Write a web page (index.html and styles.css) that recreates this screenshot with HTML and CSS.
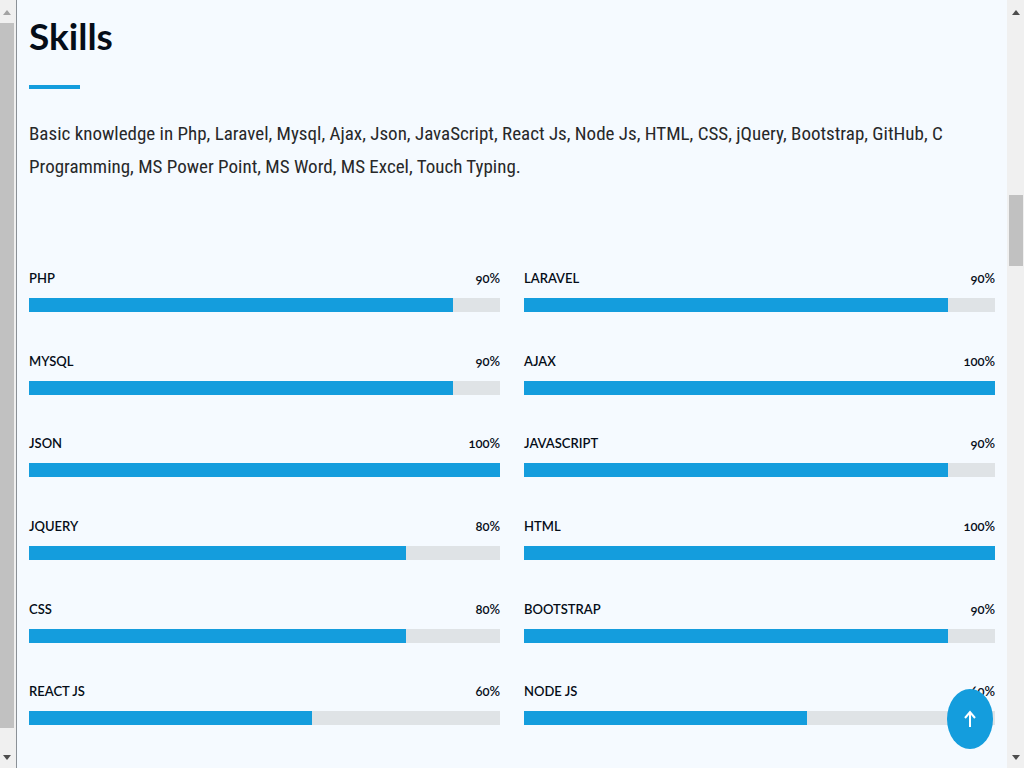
FILE: index.html
```html
<!DOCTYPE html>
<html lang="en">
<head>
<meta charset="utf-8">
<title>Skills</title>
<link rel="stylesheet" href="styles.css">
</head>
<body>
<div class="page">
  <div class="scrollbar scrollbar-left" aria-hidden="true">
    <svg class="arrow arrow-muted" viewBox="0 0 8 5"><path d="M4 0 8 5H0z"/></svg>
    <div class="rail"><div class="thumb"></div></div>
    <svg class="arrow" viewBox="0 0 8 5"><path d="M0 0h8L4 5z"/></svg>
  </div>
  <main class="skills">
    <h2 class="title">Skills</h2>
    <p class="intro">Basic knowledge in Php, Laravel, Mysql, Ajax, Json, JavaScript, React Js, Node Js, HTML, CSS, jQuery, Bootstrap, GitHub, C Programming, MS Power Point, MS Word, MS Excel, Touch Typing.</p>
    <div class="skill-grid">
      <div class="skill"><div class="label"><span>PHP</span><span>90%</span></div><div class="track"><div class="fill" style="width:90%"></div></div></div>
      <div class="skill"><div class="label"><span>LARAVEL</span><span>90%</span></div><div class="track"><div class="fill" style="width:90%"></div></div></div>
      <div class="skill"><div class="label"><span>MYSQL</span><span>90%</span></div><div class="track"><div class="fill" style="width:90%"></div></div></div>
      <div class="skill"><div class="label"><span>AJAX</span><span>100%</span></div><div class="track"><div class="fill" style="width:100%"></div></div></div>
      <div class="skill"><div class="label"><span>JSON</span><span>100%</span></div><div class="track"><div class="fill" style="width:100%"></div></div></div>
      <div class="skill"><div class="label"><span>JAVASCRIPT</span><span>90%</span></div><div class="track"><div class="fill" style="width:90%"></div></div></div>
      <div class="skill"><div class="label"><span>JQUERY</span><span>80%</span></div><div class="track"><div class="fill" style="width:80%"></div></div></div>
      <div class="skill"><div class="label"><span>HTML</span><span>100%</span></div><div class="track"><div class="fill" style="width:100%"></div></div></div>
      <div class="skill"><div class="label"><span>CSS</span><span>80%</span></div><div class="track"><div class="fill" style="width:80%"></div></div></div>
      <div class="skill"><div class="label"><span>BOOTSTRAP</span><span>90%</span></div><div class="track"><div class="fill" style="width:90%"></div></div></div>
      <div class="skill"><div class="label"><span>REACT JS</span><span>60%</span></div><div class="track"><div class="fill" style="width:60%"></div></div></div>
      <div class="skill"><div class="label"><span>NODE JS</span><span>60%</span></div><div class="track"><div class="fill" style="width:60%"></div></div></div>
    </div>
  </main>
  <div class="scrollbar scrollbar-right" aria-hidden="true">
    <svg class="arrow" viewBox="0 0 8 5"><path d="M4 0 8 5H0z"/></svg>
    <div class="rail"><div class="thumb"></div></div>
    <svg class="arrow" viewBox="0 0 8 5"><path d="M0 0h8L4 5z"/></svg>
  </div>
</div>
<a class="back-to-top" href="#" aria-label="Back to top">
  <svg viewBox="0 0 12 18"><path d="M6 17V2M1 8l5-6 5 6"/></svg>
</a>
</body>
</html>
```

FILE: styles.css
```css
* { box-sizing: border-box; }
body {
  margin: 0;
  background: #f5faff;
  color: #272829;
  font-family: "Roboto Condensed", Roboto, "Liberation Sans", sans-serif;
}
.page { display: flex; min-height: 100vh; }
.scrollbar {
  display: flex;
  flex: none;
  flex-direction: column;
  align-items: center;
  background: #f0f0f0;
  padding: 10px 0 8px;
}
.scrollbar-left {
  width: 17px;
  padding-right: 2px;
  border-right: 1px solid #8a9096;
}
.scrollbar-right { width: 17px; }
.arrow { width: 8px; height: 5px; flex: none; fill: #4d4d4d; }
.arrow-muted { fill: #a3a3a3; }
.rail { flex: 1; width: 14px; }
.thumb { background: #c1c1c1; }
.scrollbar-left .rail { padding: 8px 0 27px; }
.scrollbar-left .thumb { height: 100%; }
.scrollbar-right .rail { padding-top: 180px; }
.scrollbar-right .thumb { height: 71px; }
.skills {
  display: flex;
  flex: 1;
  flex-direction: column;
  padding: 12px 12px 6px;
}
.title {
  margin: 0 0 28px;
  color: #050d18;
  font: 700 37px/48px Lato, sans-serif;
}
.title::after {
  content: "";
  display: block;
  width: 51px;
  height: 4px;
  margin-top: 25px;
  background: #149ddd;
}
.intro { margin: 0; font-size: 19px; line-height: 33px; }
.skill-grid {
  display: grid;
  flex: 1;
  grid-template-columns: 1fr 1fr;
  grid-auto-rows: 1fr;
  column-gap: 24px;
  margin-top: 83px;
}
.label {
  display: flex;
  justify-content: space-between;
  margin-bottom: 8px;
  color: #050d18;
  font: 600 13px/24px Lato, sans-serif;
  font-variant-numeric: oldstyle-nums;
}
.track { height: 14px; background: #dfe3e6; }
.fill { height: 100%; background: #149ddd; }
.back-to-top {
  position: fixed;
  right: 31px;
  bottom: 19px;
  display: flex;
  align-items: center;
  justify-content: center;
  width: 46px;
  height: 60px;
  border-radius: 50%;
  background: #149ddd;
}
.back-to-top svg {
  width: 12px;
  height: 18px;
  fill: none;
  stroke: #fff;
  stroke-width: 2;
}
```
